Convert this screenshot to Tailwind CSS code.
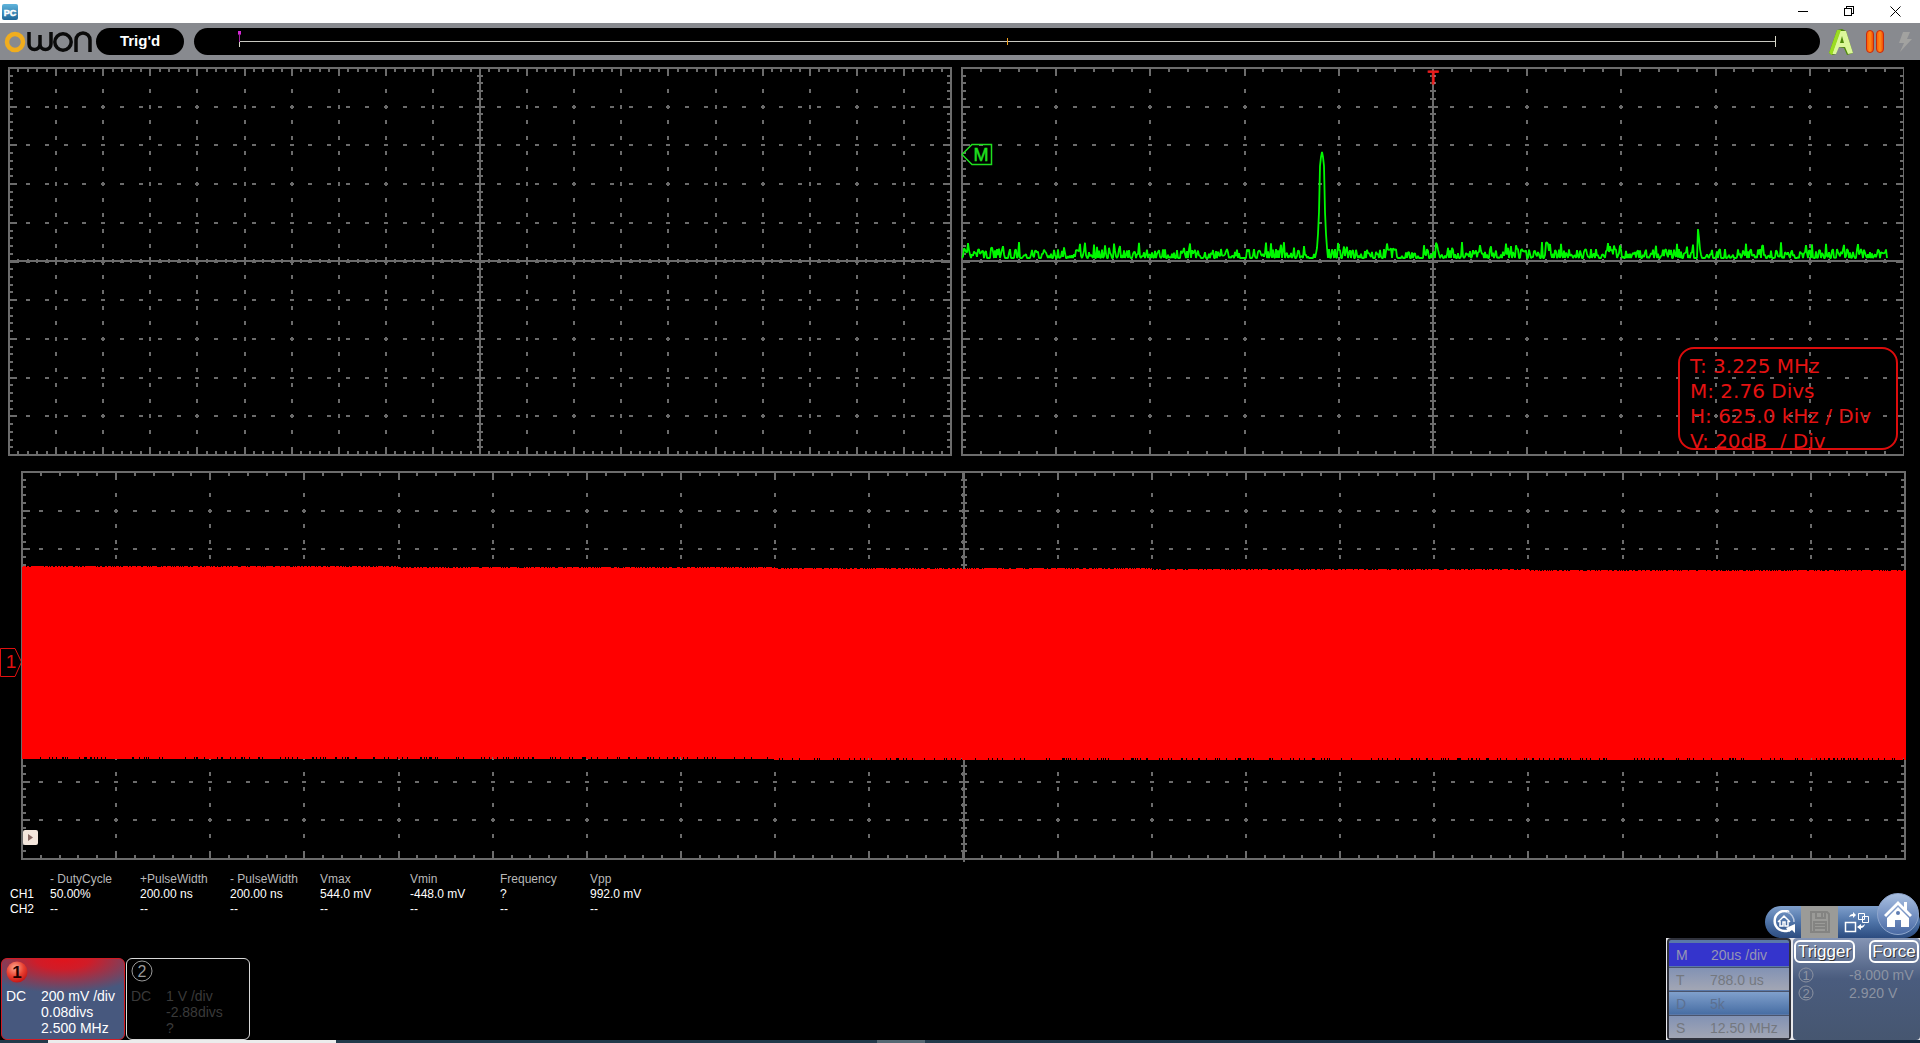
<!DOCTYPE html>
<html lang="en">
<head>
    <meta charset="UTF-8">
    <meta name="viewport" content="width=device-width, initial-scale=1.0">
    <title>OWON Oscilloscope</title>
    <script src="https://cdn.jsdelivr.net/npm/@tailwindcss/browser@4"></script>
</head>
<body class="bg-black min-h-screen flex flex-col overflow-x-hidden font-['Liberation_Sans',Arial,sans-serif] text-white">

    <!-- Window title bar -->
    <header class="bg-white h-[23px] flex items-center justify-between pl-[2px] pr-[19px]">
        <svg width="16" height="16" viewBox="0 0 16 16" role="img" aria-label="PC">
            <defs>
                <linearGradient id="pc-bg" x1="0" y1="0" x2="0" y2="1">
                    <stop offset="0" stop-color="#5fb4dc"/>
                    <stop offset="1" stop-color="#1f6698"/>
                </linearGradient>
            </defs>
            <rect width="16" height="16" rx="2" fill="url(#pc-bg)"/>
            <text x="8" y="12" text-anchor="middle" font-size="9" font-weight="bold" fill="#fff" stroke="#fff" stroke-width="0.5">PC</text>
        </svg>
        <div class="flex gap-[35px] text-black">
            <button aria-label="Minimize">
                <svg width="11" height="11" viewBox="0 0 11 11" shape-rendering="crispEdges"><path d="M0 5.5H10" stroke="currentColor"/></svg>
            </button>
            <button aria-label="Restore">
                <svg width="11" height="11" viewBox="0 0 11 11" fill="none" stroke="currentColor" shape-rendering="crispEdges"><path d="M0.5 2.5H7.5V9.5H0.5ZM2.5 2.5V0.5H9.5V7.5H7.5"/></svg>
            </button>
            <button aria-label="Close">
                <svg width="11" height="11" viewBox="0 0 11 11" stroke="currentColor"><path d="M0.5 0.5L10.5 10.5M10.5 0.5L0.5 10.5"/></svg>
            </button>
        </div>
    </header>

    <!-- Status bar -->
    <div class="bg-[#888a8f] h-[37px] flex items-center pl-1 pr-2">
        <svg class="shrink-0" width="88" height="22" viewBox="0 0 88 22" fill="none" stroke-width="4" role="img" aria-label="OWON">
            <circle cx="11" cy="11" r="8" stroke="#f0ad1e" stroke-width="4.5"/>
            <g stroke="#0a0a0a" stroke-width="3.5">
                <path d="M25 1V13a5.500 5.500 0 0 0 11 0V4M36 13a5.500 5.500 0 0 0 11 0V1"/>
                <circle cx="59" cy="11" r="8.200"/>
                <path d="M72 21V9a7 7 0 0 1 14 0V21"/>
            </g>
        </svg>
        <div class="ml-1 w-[88px] h-[27px] shrink-0 rounded-full bg-black flex items-center justify-center text-[15px] font-bold">Trig'd</div>
        <div class="ml-[10px] flex-1 h-[27px] rounded-full bg-black flex items-center pl-[45px] pr-11">
            <div class="relative w-full h-[11px] border-x border-[#d8d8c8] flex items-center">
                <div class="w-full h-px bg-[#c8c8c0]"></div>
                <svg class="absolute -left-[3px] -top-[5px]" width="5" height="11" viewBox="0 0 5 11"><path d="M1 0H4V3L2.500 5L1 3Z" fill="#d428d4"/><path d="M2.500 3V11" stroke="#a020a0"/></svg>
                <div class="absolute left-1/2 -ml-px top-[2px] w-px h-[7px] bg-[#f0a020]"></div>
            </div>
        </div>
        <div class="flex items-center ml-2 shrink-0">
            <button aria-label="Auto set">
                <svg width="26" height="28" viewBox="0 0 26 28">
                    <path d="M1 25L9 2L14 1L18 3L25 25L19 27L16 20L10 19L8 26L4 27Z" fill="#4f8a0a"/>
                    <path d="M4 26L12 3L18 3L25 25L20 26L17 19H11L8 26ZM12 15H16L14 8Z" fill="#dcf79a" fill-rule="evenodd"/>
                    <path d="M1 25L9 2L13 2L4 27Z" fill="#9bdc22"/>
                </svg>
            </button>
            <button class="ml-3" aria-label="Pause">
                <svg width="18" height="24" viewBox="0 0 18 24">
                    <defs>
                        <linearGradient id="bar" x1="0" x2="1">
                            <stop offset="0" stop-color="#ff5a00"/>
                            <stop offset="0.5" stop-color="#ff8a1c"/>
                            <stop offset="1" stop-color="#f04800"/>
                        </linearGradient>
                    </defs>
                    <rect x="0.500" y="0.500" width="7" height="22" rx="3.500" fill="url(#bar)" stroke="#c82810"/>
                    <rect x="10.500" y="0.500" width="7" height="22" rx="3.500" fill="url(#bar)" stroke="#c82810"/>
                </svg>
            </button>
            <button class="ml-[14px]" aria-label="Single trigger">
                <svg width="14" height="20" viewBox="0 0 14 20"><path d="M5 0H12L9 7H14L2 20L6 11H1Z" fill="#a2a2a0"/></svg>
            </button>
        </div>
    </div>

    <main class="pt-[7px]">
        <div class="grid grid-cols-2 gap-[9px] pl-2 pr-4">
            <svg id="plot-left" class="block w-full h-[389px]" shape-rendering="crispEdges"></svg>

            <div class="relative">
                <svg id="plot-fft" class="block w-full h-[389px]" shape-rendering="crispEdges"></svg>
                <svg class="absolute left-0 top-[76px]" width="32" height="23" viewBox="0 0 32 23">
                    <path d="M1 11.500L11 1.500H30.500V21.500H11Z" fill="none" stroke="#1fe01f" stroke-width="1.500"/>
                    <text x="20" y="18" text-anchor="middle" font-size="18" fill="#1fe01f" stroke="#1fe01f" stroke-width="0.5">M</text>
                </svg>
                <svg class="absolute left-1/2 top-[2px]" width="16" height="18" viewBox="8 0 16 18" overflow="visible">
                    <text x="9" y="15" text-anchor="middle" font-size="18" fill="#e81c1c" stroke="#e81c1c" stroke-width="0.8">T</text>
                </svg>
                <div class="absolute right-[6px] bottom-[6px] w-[220px] h-[103px] rounded-2xl border-2 border-[#dc0c0c] pl-[10px] pt-[5px] font-['DejaVu_Sans',sans-serif] text-[20px] leading-[25px] text-[#e41212]">
                    <p>T: 3.225 MHz</p>
                    <p>M: 2.76 Divs</p>
                    <p>H: 625.0 kHz / Div</p>
                    <p>V: 20dB&nbsp; / Div</p>
                </div>
            </div>
        </div>

        <div class="flex mt-[15px] pr-[14px]">
            <div class="w-[21px] shrink-0 pt-[176px]">
                <svg class="block" width="22" height="31" viewBox="0 0 22 31">
                    <path d="M0.500 1.500H15L21.500 15L15 29.500H0.500Z" fill="none" stroke="#e01010"/>
                    <text x="11" y="21" text-anchor="middle" font-size="19" fill="#e01010">1</text>
                </svg>
            </div>
            <div class="relative flex-1 min-w-0">
                <svg id="plot-main" class="block w-full h-[389px] overflow-visible" shape-rendering="crispEdges"></svg>
                <button class="absolute left-[2px] bottom-[15px] w-[15px] h-[15px] rounded-xs bg-[#f4e6dc] flex items-center justify-center" aria-label="Expand">
                    <svg width="7" height="7" viewBox="0 0 7 7"><path d="M1 0L6 3.500L1 7Z" fill="#8a6a64"/></svg>
                </button>
            </div>
        </div>
    </main>

    <footer class="flex-1 flex justify-between">
        <div class="flex flex-col justify-between">
            <table class="mt-3 ml-[10px] table-fixed w-[670px] text-xs leading-[15px] text-left">
                <thead class="text-[#b8b8b8]">
                    <tr>
                        <th class="w-10"></th>
                        <th class="w-[90px] font-normal">- DutyCycle</th>
                        <th class="w-[90px] font-normal">+PulseWidth</th>
                        <th class="w-[90px] font-normal">- PulseWidth</th>
                        <th class="w-[90px] font-normal">Vmax</th>
                        <th class="w-[90px] font-normal">Vmin</th>
                        <th class="w-[90px] font-normal">Frequency</th>
                        <th class="w-[90px] font-normal">Vpp</th>
                    </tr>
                </thead>
                <tbody>
                    <tr>
                        <th class="font-normal">CH1</th>
                        <td>50.00%</td>
                        <td>200.00 ns</td>
                        <td>200.00 ns</td>
                        <td>544.0 mV</td>
                        <td>-448.0 mV</td>
                        <td>?</td>
                        <td>992.0 mV</td>
                    </tr>
                    <tr>
                        <th class="font-normal">CH2</th>
                        <td>--</td>
                        <td>--</td>
                        <td>--</td>
                        <td>--</td>
                        <td>--</td>
                        <td>--</td>
                        <td>--</td>
                    </tr>
                </tbody>
            </table>

            <!-- Channel cards -->
            <div class="flex gap-px pl-px text-sm leading-4">
                <button class="w-[124px] h-[82px] flex flex-col rounded-md border border-[#d01c24] bg-[#475a80] bg-[radial-gradient(ellipse_90px_34px_at_50%_0%,#e0141c_0%,#d01c28_30%,#47587e_100%)] px-1 pt-[2px] text-left">
                    <svg width="22" height="22" viewBox="0 0 22 22">
                        <defs>
                            <radialGradient id="ball" cx="0.4" cy="0.300" r="0.700">
                                <stop offset="0" stop-color="#ffa890"/>
                                <stop offset="0.600" stop-color="#e84030"/>
                                <stop offset="1" stop-color="#c41818"/>
                            </radialGradient>
                        </defs>
                        <circle cx="11" cy="11" r="10.500" fill="url(#ball)"/>
                        <text x="11" y="17" text-anchor="middle" font-size="17" font-weight="bold" fill="#200">1</text>
                    </svg>
                    <span class="grid grid-cols-[35px_1fr] mt-[5px] whitespace-nowrap">
                        <span>DC</span>
                        <span>200 mV /div<br>0.08divs<br>2.500 MHz</span>
                    </span>
                </button>
                <button class="w-[124px] h-[82px] flex flex-col rounded-md border border-[#d8d8d8] px-1 pt-px text-left text-[#3a3a3a]">
                    <svg class="text-[#9a9a9a]" width="22" height="22" viewBox="0 0 22 22">
                        <circle cx="11" cy="11" r="10" fill="none" stroke="currentColor"/>
                        <text x="11" y="17" text-anchor="middle" font-size="16" fill="currentColor">2</text>
                    </svg>
                    <span class="grid grid-cols-[35px_1fr] mt-[6px] whitespace-nowrap">
                        <span>DC</span>
                        <span>1 V /div<br>-2.88divs<br>?</span>
                    </span>
                </button>
            </div>
        </div>

        <!-- Right dock -->
        <div class="flex flex-col items-end justify-end w-[254px] shrink-0">
            <div class="relative w-[155px] h-8 flex rounded-full bg-linear-to-b from-[#7f9fcb] via-[#4f74a8] to-[#2c4c80]">
                <button class="w-9 flex items-center justify-center pl-1" aria-label="Default view">
                    <svg width="26" height="24" viewBox="0 0 26 24" fill="none" stroke="#fff">
                        <path d="M17 2A10 10 0 1 0 17 20" stroke-width="2.500"/>
                        <path d="M6 12L12 6L18 12M8 11V16H11V12H13V16H16V11" stroke-width="1.500"/>
                        <path d="M15 2A10 10 0 0 1 22 12" stroke="#b9c8e0" stroke-width="1.500"/>
                        <path d="M14 18L23 14V23L20 20L17 22Z" fill="#fff" stroke="none"/>
                    </svg>
                </button>
                <button class="w-[37px] bg-[#9b9b98] flex items-center justify-center" aria-label="Save">
                    <svg width="20" height="22" viewBox="0 0 20 22" fill="none" stroke="#848482" stroke-width="2">
                        <path d="M1 1H17L19 3V21H1Z"/>
                        <path d="M6 1V7H15V1M12 2V6M4 21V11H16V21M5 14H15M5 17H15"/>
                    </svg>
                </button>
                <button class="w-[38px] flex items-center justify-center" aria-label="Swap windows">
                    <svg width="26" height="22" viewBox="0 0 26 22" fill="none" stroke="#fff">
                        <rect x="1.500" y="11.500" width="10" height="9" stroke-width="1.500"/>
                        <path d="M14.500 2.500H20.500V8.500H14.500ZM18.500 5.500H24.500V11.500H18.500Z"/>
                        <path d="M5 6Q6 3 9 3V1L12 4L9 7V5Q7 5 5 6Z" fill="#fff" stroke="none"/>
                        <path d="M21 13Q20 17 17 17V19L13 16L17 13V15Q19 15 21 13Z" fill="#fff" stroke="none"/>
                    </svg>
                </button>
                <button class="absolute right-px bottom-[3px] w-[42px] h-[42px] rounded-full border border-[#8fa6cc] bg-linear-to-b from-[#a9bfe0] via-[#7894c4] to-[#4a6aa4] flex items-center justify-center" aria-label="Home">
                    <svg width="28" height="28" viewBox="0 0 28 28" fill="#fff">
                        <path d="M14 1L20 7V2H23V10L28 15L26 17L14 5L2 17L0 15Z"/>
                        <path d="M3 18L14 7L25 18V27H17V20H11V27H3Z"/>
                        <circle cx="14" cy="13" r="2" fill="#5f7db2"/>
                    </svg>
                </button>
            </div>

            <div class="w-full h-[102px] bg-[#e8e8ec] flex justify-between gap-[2px] pl-px text-sm leading-4">
                <div class="w-[124px] rounded-sm border-2 border-[#30323c] bg-[#5a78a8] pt-[3px] grid grid-rows-4 gap-px text-[#74787f]">
                    <button class="bg-[#3434cc] grid grid-cols-[35px_1fr] items-center pl-[7px] text-left text-[#9696b4]"><span>M</span><span>20us /div</span></button>
                    <button class="bg-linear-to-b from-[#8292b4] to-[#a2a6b4] border-t border-[#4a546c] grid grid-cols-[34px_1fr] items-end pb-[2px] pl-[7px] text-left"><span>T</span><span>788.0 us</span></button>
                    <button class="bg-linear-to-b from-[#80a0cc] to-[#486ea4] border-t border-[#4a546c] grid grid-cols-[34px_1fr] items-end pb-[2px] pl-[7px] text-left text-[#5c7090]"><span>D</span><span>5k</span></button>
                    <button class="bg-linear-to-b from-[#8292b4] to-[#a2a6b4] border-t border-[#4a546c] grid grid-cols-[34px_1fr] items-end pb-[2px] pl-[7px] text-left"><span>S</span><span>12.50 MHz</span></button>
                </div>
                <div class="w-[127px] rounded-sm bg-linear-to-b from-[#8494b4] via-[#4a5c7e] via-40% to-[#465670] px-px pt-[2px] text-[#8c93a2]">
                    <div class="flex justify-between text-[17px] leading-[19px] text-white">
                        <button class="w-[61px] h-[23px] rounded-md border-2 border-white text-shadow-[1px_1px_0_#333]">Trigger</button>
                        <button class="w-[50px] h-[23px] rounded-md border-2 border-white text-shadow-[1px_1px_0_#333]">Force</button>
                    </div>
                    <div class="mt-1 pl-1 grid grid-cols-[51px_1fr] gap-y-[2px] items-center whitespace-nowrap">
                        <svg width="16" height="16" viewBox="0 0 16 16"><circle cx="8" cy="8" r="7" fill="none" stroke="currentColor"/><text x="8" y="13" text-anchor="middle" font-size="13" fill="currentColor">1</text></svg>
                        <span>-8.000 mV</span>
                        <svg width="16" height="16" viewBox="0 0 16 16"><circle cx="8" cy="8" r="7" fill="none" stroke="currentColor"/><text x="8" y="13" text-anchor="middle" font-size="13" fill="currentColor">2</text></svg>
                        <span>2.920 V</span>
                    </div>
                </div>
            </div>
        </div>
    </footer>

    <!-- Top edge of the taskbar -->
    <div class="h-[3px] flex bg-[#22394a]">
        <div class="w-12"></div>
        <div class="w-72 bg-[#ececec]"></div>
        <div class="flex-1"></div>
        <div class="w-12 bg-[#566873]"></div>
        <div class="w-[995px] bg-linear-to-r from-[#22394a] to-[#14263c]"></div>
    </div>

<script>
const GRID_COLOR = '#6c6c6c';
const SVG_NS = 'http://www.w3.org/2000/svg';

// Small seeded generator so the traces keep their shape on redraw
function createRandom(seed) {
    return function () {
        seed = (seed * 1664525 + 1013904223) % 4294967296;
        return seed / 4294967296;
    };
}

function addPath(svg, d, attrs) {
    const path = document.createElementNS(SVG_NS, 'path');
    path.setAttribute('d', d);
    for (const name in attrs) path.setAttribute(name, attrs[name]);
    svg.appendChild(path);
}

function rect(x, y, w, h) {
    return `M${Math.round(x)} ${Math.round(y)}h${w}v${h}h${-w}z`;
}

// divs: divisions across, dotEvery: minor ticks between dots, five minor ticks per division
function drawGrid(svg, divs, dotEvery) {
    const w = Math.floor(svg.clientWidth);
    const h = svg.clientHeight;
    const spanX = w - 2;
    const spanY = h - 2;
    const stepX = spanX / (divs * 5);
    const stepY = spanY / 50;
    const midX = spanX / 2;
    const midY = Math.round(spanY / 2) - 1;
    let d = rect(0, 0, w, 2) + rect(0, h - 2, w, 2) + rect(0, 0, 2, h) + rect(w - 2, 0, 2, h);
    d += rect(midX, 0, 2, h + 2) + rect(0, midY, w, 2);

    for (let i = 1; i < divs * 5; i++) {
        const x = i * stepX;
        const major = i % 5 === 0;
        const len = major ? 9 : 5;
        d += rect(x, 0, 2, len) + rect(x, h - len, 2, len);
        d += major ? rect(x, midY - 3, 2, 8) : rect(x, midY - 1, 2, 4);
        if (major) {
            // Dots run outward from the centre line, two minor steps apart
            for (let j = 3; j < 49; j += 2) {
                if (j !== 25) d += rect(x, j * stepY - 1, 2, 4);
            }
        }
        if (i % dotEvery === 0) {
            for (let j = 1; j < 10; j++) d += rect(x - 1, j * spanY / 10, 4, 2);
        }
    }
    for (let j = 1; j < 50; j++) {
        const y = j * stepY;
        const major = j % 5 === 0;
        const len = major ? 9 : 5;
        d += rect(0, y, len, 2) + rect(w - len, y, len, 2);
        d += major ? rect(midX - 4, y, 10, 2) : rect(midX - 2, y, 6, 2);
    }
    addPath(svg, d, { fill: GRID_COLOR });
}

function drawSpectrum(svg) {
    const random = createRandom(41);
    const w = svg.clientWidth;
    const base = 191;
    const end = Math.round(w * 0.981);
    const peak = Math.round(w * 0.382);
    const harmonic = Math.round(w * 0.781);
    // Height above the noise floor, by distance from the main peak
    const lobe = { 0: 106, 1: 101, 2: 92, 3: 46, 4: 24, 5: 10 };
    let d = '';
    for (let x = 1; x <= end; x++) {
        let v = random() < 0.35 ? 0 : random() * 9;
        if (random() < 0.09) v = 8 + random() * 8;
        const dist = Math.abs(x - peak);
        if (dist in lobe) v = lobe[dist];
        if (x === harmonic) v = 29;
        if (x === harmonic + 1) v = 20;
        d += `${x === 1 ? 'M' : 'L'}${x} ${(base - v).toFixed(1)}`;
    }
    addPath(svg, d, { fill: 'none', stroke: '#00f800', 'stroke-width': 1.8, 'stroke-linejoin': 'bevel', 'shape-rendering': 'auto' });
}

function drawWaveform(svg) {
    const random = createRandom(7);
    const w = svg.clientWidth;
    let d = 'M1 190';
    for (let x = 1; x < w; x++) {
        const y = 95 + Math.floor(x / w * 5) + (random() < 0.35 ? 1 : 0);
        d += `L${x} ${y}H${x + 1}`;
    }
    for (let x = w; x > 1; x--) {
        const y = 289 - (random() < 0.2 ? 2 : 0) - (x < w * 0.4 ? 1 : 0);
        d += `L${x} ${y}H${x - 1}`;
    }
    addPath(svg, d + 'Z', { fill: '#ff0000' });
}

function drawAll() {
    const left = document.getElementById('plot-left');
    const fft = document.getElementById('plot-fft');
    const main = document.getElementById('plot-main');
    [left, fft, main].forEach(svg => svg.replaceChildren());
    drawGrid(left, 20, 2);
    drawGrid(fft, 10, 1);
    drawGrid(main, 20, 1);
    drawSpectrum(fft);
    drawWaveform(main);
}

// Fires once on start and again whenever the plots change size
const observer = new ResizeObserver(drawAll);
observer.observe(document.getElementById('plot-left'));
observer.observe(document.getElementById('plot-main'));
</script>
</body>
</html>
